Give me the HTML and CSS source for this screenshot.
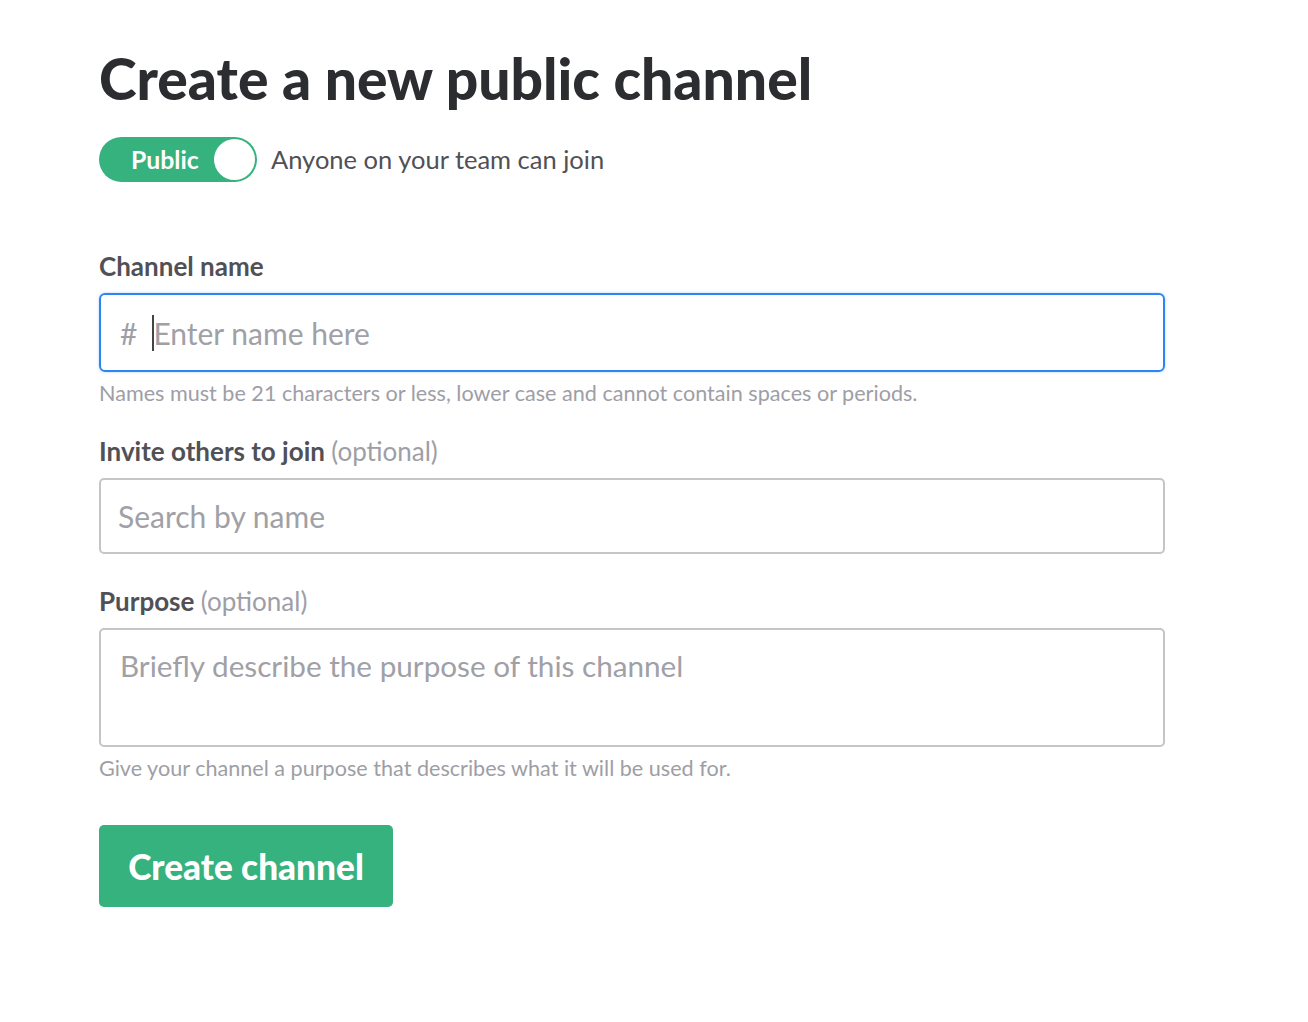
FILE: index.html
```html
<!DOCTYPE html>
<html>
<head>
<meta charset="utf-8">
<link rel="stylesheet" href="styles.css">
</head>
<body>
<main class="page">
  <h1 class="title">Create a new public channel</h1>
  <div class="toggle-row">
    <div class="toggle"><span class="toggle-text">Public</span><span class="knob"></span></div>
    <span class="toggle-desc">Anyone on your team can join</span>
  </div>

  <label class="label label-first">Channel name</label>
  <div class="input focused"><span class="hash">#</span><span class="caret"></span><span class="ph">Enter name here</span></div>
  <p class="hint">Names must be 21 characters or less, lower case and cannot contain spaces or periods.</p>

  <label class="label label-invite">Invite others to join <span class="opt">(optional)</span></label>
  <div class="input search"><span class="ph">Search by name</span></div>

  <label class="label label-purpose">Purpose <span class="opt">(optional)</span></label>
  <div class="input textarea"><span class="ph">Briefly describe the purpose of this channel</span></div>
  <p class="hint hint-purpose">Give your channel a purpose that describes what it will be used for.</p>

  <button class="btn">Create channel</button>
</main>
</body>
</html>
```

FILE: styles.css
```css
* { box-sizing: border-box; }
body {
  margin: 0;
  background: #fff;
  font-family: Lato, "Open Sans", sans-serif;
  color: #2c2d30;
}
.page {
  width: 1066px;
  margin-left: 99px;
  padding-top: 40px;
  display: flex;
  flex-direction: column;
  align-items: flex-start;
}
.title {
  margin: 0;
  font-size: 57px;
  font-weight: 900;
  line-height: 76px;
  color: #2c2d30;
}
.toggle-row {
  display: flex;
  align-items: center;
  margin-top: 21px;
}
.toggle {
  width: 158px;
  height: 45px;
  border-radius: 23px;
  background: #35b27d;
  display: flex;
  align-items: center;
  justify-content: space-between;
  padding: 0 2px 0 32px;
}
.toggle-text {
  color: #fff;
  font-weight: 700;
  font-size: 24.8px;
}
.knob {
  width: 41px;
  height: 41px;
  border-radius: 50%;
  background: #fff;
}
.toggle-desc {
  margin-left: 14px;
  margin-top: -2px;
  font-size: 25.5px;
  color: #505055;
}
.label {
  font-size: 26px;
  font-weight: 700;
  color: #505055;
  line-height: 30px;
}
.label-first { margin-top: 69px; }
.label-invite { margin-top: 29px; }
.label-purpose { margin-top: 32px; }
.opt { font-weight: 400; color: #9e9ea6; }
.input {
  width: 100%;
  margin-top: 12px;
  border: 2px solid #c5c5c5;
  border-radius: 5px;
  display: flex;
  align-items: center;
  font-size: 30px;
  color: #9e9ea6;
}
.focused {
  height: 79px;
  border-color: #2d84f3;
  border-radius: 6px;
  box-shadow: 0 0 3px rgba(45,132,243,0.35);
  padding-left: 19px;
}
.hash { color: #9e9ea6; font-size: 30px; margin-right: 15px; }
.caret { width: 2px; height: 36px; background: #444; margin-right: -1px; }
.ph { color: #a0a0a6; }
.search { height: 76px; padding-left: 17px; }
.textarea {
  height: 119px;
  align-items: flex-start;
  padding: 18px 0 0 19px;
  font-size: 29.7px;
}
.hint {
  margin: 7px 0 0;
  font-size: 21.6px;
  line-height: 28px;
  color: #9e9ea6;
}
.hint-purpose { margin-top: 7px; }
.btn {
  margin-top: 43px;
  width: 294px;
  height: 82px;
  border: none;
  border-radius: 5px;
  background: #35b27d;
  color: #fff;
  font-family: Lato, sans-serif;
  font-weight: 900;
  font-size: 35.2px;
  padding: 0;
}
```
